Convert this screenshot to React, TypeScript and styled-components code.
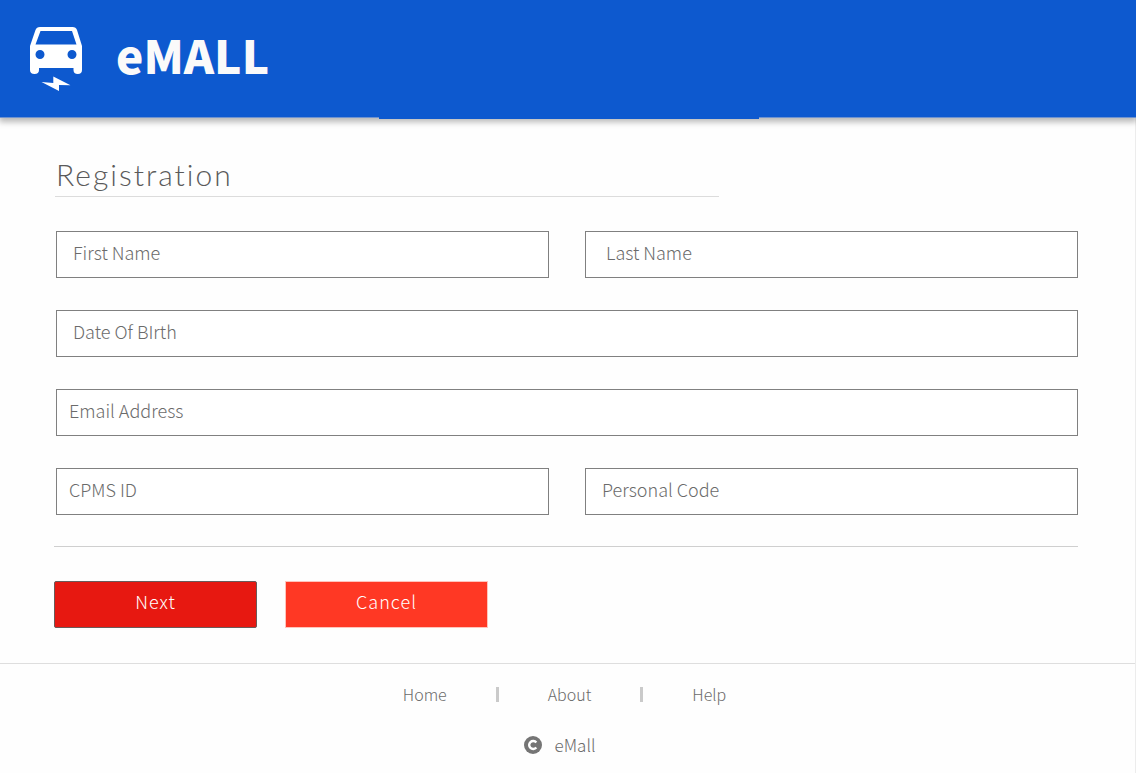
import React from "react";
import styled, { createGlobalStyle } from "styled-components";

const sans = `"Noto Sans CJK SC", "Noto Sans", sans-serif`;

const GlobalStyle = createGlobalStyle`
  *, *::before, *::after { box-sizing: border-box; }
  html, body { margin: 0; background: #fefefe; }
  body { font-family: ${sans}; font-weight: 300; color: #6b6b6b; }
`;

const Page = styled.div`
  min-height: 100vh;
  display: flex;
  flex-direction: column;
  border-right: 1px solid #ececec;
`;

const Header = styled.header`
  position: relative;
  display: flex;
  align-items: flex-start;
  gap: 33px;
  height: 118px;
  margin-right: -1px;
  padding: 27px 30px 0;
  background: #0d59cf;
  border-bottom: 1px solid #6f93cf;
  box-shadow: 0 3px 6px 1px rgba(0, 0, 0, 0.28);
`;

const ActiveMarker = styled.span`
  position: absolute;
  top: 100%;
  left: 33.4%;
  width: 33.4%;
  height: 2px;
  background: #0d59cf;
`;

const Logo = styled.svg`
  width: 53px;
  height: 65px;
  flex: none;
`;

const Brand = styled.span`
  font-size: 46px;
  line-height: 54px;
  font-weight: 900;
  color: #fafafa;
`;

const Main = styled.main`
  padding: 40px 57px 35px 56px;
`;

const Title = styled.h1`
  width: 65%;
  margin: 0 0 34px -1px;
  padding: 0 0 6px 1px;
  border-bottom: 1px solid #dcdcdc;
  font-family: Lato, sans-serif;
  font-size: 30px;
  line-height: 32px;
  font-weight: 300;
  letter-spacing: 2px;
  color: #5a5a5a;
`;

const Form = styled.form`
  display: flex;
  flex-direction: column;
  gap: 32px;
`;

const Row = styled.div`
  display: grid;
  grid-auto-flow: column;
  grid-auto-columns: minmax(0, 1fr);
  gap: 36px;
`;

const Field = styled.input<{ $indent: number }>`
  width: 100%;
  height: 47px;
  padding: 0 16px 6px ${(p) => p.$indent}px;
  border: 1px solid #808080;
  border-radius: 0;
  background: #fff;
  font: 300 18px/24px ${sans};
  color: #6b6b6b;
  &::placeholder { color: #6b6b6b; opacity: 1; }
`;

const Actions = styled.div`
  display: flex;
  gap: 28px;
  margin: -1px 0 0 -2px;
  padding-top: 34px;
  border-top: 1px solid #cfcfcf;
`;

const Button = styled.button<{ $primary?: boolean }>`
  width: 203px;
  height: 47px;
  padding: 0 0 8px;
  border: 1px solid ${(p) => (p.$primary ? "#6a5a5a" : "#ffc4bc")};
  border-radius: ${(p) => (p.$primary ? 2 : 0)}px;
  background: ${(p) => (p.$primary ? "#e71811" : "#ff3824")};
  color: #fff;
  font: 300 18px/24px ${sans};
  letter-spacing: 1px;
`;

const Footer = styled.footer`
  display: flex;
  flex-direction: column;
  align-items: center;
  gap: 27px;
  padding-top: 18px;
  border-top: 1px solid #dedede;
  font-size: 16px;
  line-height: 24px;
`;

const Links = styled.nav`
  display: flex;
  align-items: center;
  gap: 49px;
  padding-right: 6px;
`;

const FooterLink = styled.a`
  color: inherit;
  text-decoration: none;
`;

const Divider = styled.span`
  width: 3px;
  height: 15px;
  background: #cacaca;
`;

const Copyright = styled.div`
  display: flex;
  align-items: center;
  gap: 13px;
  padding-right: 16px;
  font-size: 17px;
`;

const CopyrightIcon = styled.svg`
  width: 18px;
  height: 18px;
`;

export default function App() {
  return (
    <>
      <GlobalStyle />
      <Page>
        <Header>
          <Logo viewBox="0 0 53 65" aria-hidden="true">
            <path
              fill="#fff"
              fillRule="evenodd"
              d="M10 0H42.500Q46 0 47 3L52 19V43Q52 47 47.800 47Q43.500 47 43.500 43V41H9V43Q9 47 4.500 47Q0 47 0 43V19L5.500 3Q6.500 0 10 0ZM10.500 4L5.500 17.500H46.500L42 4ZM10 23A4.500 4.500 0 1 0 10 32A4.500 4.500 0 1 0 10 23ZM42 23A4.500 4.500 0 1 0 42 32A4.500 4.500 0 1 0 42 23Z"
            />
            <path fill="#fff" d="M11.500 55L23.300 56V49.500L40.500 58.200L29 58V64Z" />
          </Logo>
          <Brand>eMALL</Brand>
          <ActiveMarker />
        </Header>
        <Main>
          <Title>Registration</Title>
          <Form onSubmit={(e) => e.preventDefault()}>
            <Row>
              <Field $indent={16} placeholder="First Name" aria-label="First Name" />
              <Field $indent={20} placeholder="Last Name" aria-label="Last Name" />
            </Row>
            <Row>
              <Field $indent={16} placeholder="Date Of BIrth" aria-label="Date Of BIrth" />
            </Row>
            <Row>
              <Field $indent={12} type="email" placeholder="Email Address" aria-label="Email Address" />
            </Row>
            <Row>
              <Field $indent={12} placeholder="CPMS ID" aria-label="CPMS ID" />
              <Field $indent={16} placeholder="Personal Code" aria-label="Personal Code" />
            </Row>
            <Actions>
              <Button type="submit" $primary>Next</Button>
              <Button type="button">Cancel</Button>
            </Actions>
          </Form>
        </Main>
        <Footer>
          <Links aria-label="Footer">
            <FooterLink href="#home">Home</FooterLink>
            <Divider />
            <FooterLink href="#about">About</FooterLink>
            <Divider />
            <FooterLink href="#help">Help</FooterLink>
          </Links>
          <Copyright>
            <CopyrightIcon viewBox="0 0 18 18" aria-hidden="true">
              <circle cx="9" cy="9" r="9" fill="#757575" />
              <path d="M12.300 6.500A4 4 0 1 0 12.300 11.500" fill="none" stroke="#fff" strokeWidth="2.400" />
            </CopyrightIcon>
            eMall
          </Copyright>
        </Footer>
      </Page>
    </>
  );
}
